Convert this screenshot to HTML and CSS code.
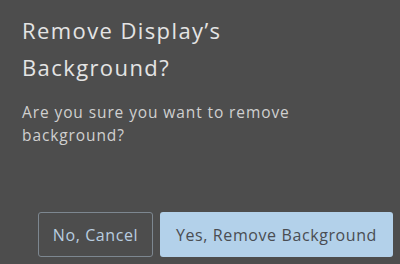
FILE: index.html
```html
<!DOCTYPE html>
<html lang="en">
<head>
  <meta charset="UTF-8" />
  <title>Remove Background</title>
  <link rel="stylesheet" href="styles.css">
</head>
<body>
  <div class="dialog">
    <h2 class="dialog-title">Remove Display’s Background?</h2>
    <p class="dialog-text">Are you sure you want to remove background?</p>
    <div class="dialog-actions">
      <button class="btn btn-cancel" type="button">No, Cancel</button>
      <button class="btn btn-confirm" type="button">Yes, Remove Background</button>
    </div>
  </div>
</body>
</html>
```

FILE: styles.css
```css
* {
  box-sizing: border-box;
}

body {
  margin: 0;
  background: #4d4d4d;
  font-family: "Open Sans", "Lato", sans-serif;
}

.dialog {
  display: flex;
  flex-direction: column;
  min-height: 100vh;
  padding: 12px 7px 7px 22px;
}

.dialog-title {
  margin: 0;
  width: 260px;
  font-size: 22px;
  font-weight: 400;
  line-height: 37px;
  letter-spacing: 1.4px;
  color: #e4e4e4;
}

.dialog-text {
  margin: 15px 0 0;
  width: 300px;
  font-size: 15.5px;
  line-height: 23px;
  letter-spacing: 0.9px;
  color: #d0d0d0;
}

.dialog-actions {
  display: flex;
  justify-content: flex-end;
  gap: 7px;
  margin-top: auto;
}

.btn {
  height: 45px;
  padding: 0;
  border-radius: 3px;
  font-family: inherit;
  font-size: 16px;
  letter-spacing: 0.6px;
  cursor: pointer;
}

.btn-cancel {
  width: 115px;
  background: transparent;
  border: 1px solid #7d8790;
  color: #b9cde0;
}

.btn-confirm {
  width: 233px;
  background: #b3d1ea;
  border: none;
  color: #4a4d52;
}
```
